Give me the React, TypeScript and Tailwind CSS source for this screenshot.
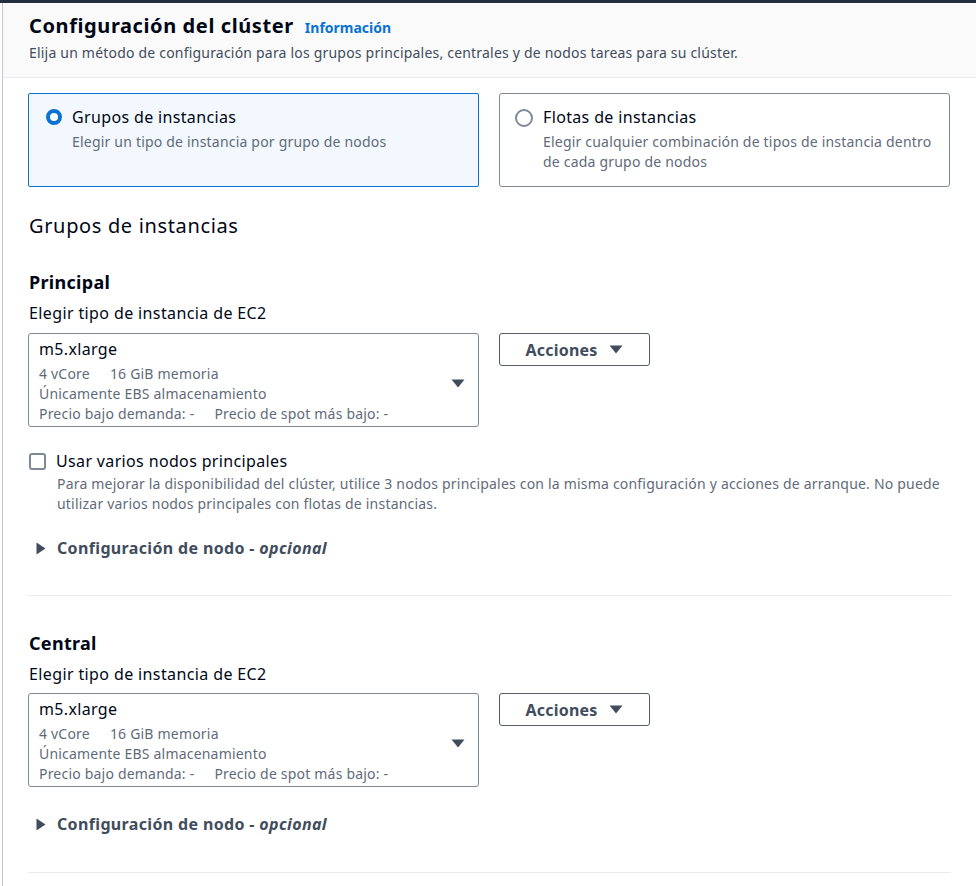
import React from 'react';

const font = { fontFamily: '"Noto Sans", "Open Sans", sans-serif' };

const Caret: React.FC<{ className?: string }> = ({ className }) => (
  <svg viewBox="0 0 14 9" className={className} fill="currentColor">
    <path d="M0.5 0.5 H13.5 L7 8.5 Z" />
  </svg>
);

const ExpandCaret: React.FC = () => (
  <svg viewBox="0 0 10 13" className="w-[10px] h-[13px] text-[#414d5c]" fill="currentColor">
    <path d="M0.5 0.5 L9.5 6.5 L0.5 12.5 Z" />
  </svg>
);

const InstanceSelect: React.FC = () => (
  <div className="flex items-start gap-[20px]">
    <div className="w-[451px] h-[94px] border border-[#7d8998] rounded-[3px] pl-[10px] pr-[13px] pt-[4px] flex items-center">
      <div className="flex-1 self-start">
        <div className="text-[16px] leading-[22px] tracking-[0.35px] text-[#000716]">m5.xlarge</div>
        <div className="mt-[4px] text-[14px] leading-[20px] text-[#5f6b7a]">
          <div>4 vCore<span className="ml-[20px]">16 GiB memoria</span></div>
          <div>Únicamente EBS almacenamiento</div>
          <div>Precio bajo demanda: -<span className="ml-[20px]">Precio de spot más bajo: -</span></div>
        </div>
      </div>
      <Caret className="w-[14px] h-[9px] text-[#414d5c] mt-[2px]" />
    </div>
    <button className="w-[151px] h-[33px] border border-[#545b64] rounded-[3px] flex items-center justify-center gap-[12px] text-[16px] font-bold tracking-[0.2px] text-[#414d5c] bg-white">
      Acciones
      <Caret className="w-[14px] h-[9px] text-[#414d5c]" />
    </button>
  </div>
);

const NodeConfig: React.FC = () => (
  <div className="flex items-center gap-[11px] pl-[8px] text-[16px] leading-[22px] font-bold tracking-[0.35px] text-[#414d5c]">
    <ExpandCaret />
    <span>
      Configuración de nodo - <i>opcional</i>
    </span>
  </div>
);

export default function App() {
  return (
    <div className="min-h-screen bg-white border-t-[3px] border-[#232f3e] tracking-[0.2px]" style={font}>
      <div className="ml-[2px] border-l border-[#c6c6cd] min-h-[883px]">
        <div className="bg-[#fafafa] border-b border-[#e9ebed] pl-[26px] pt-[10px] pb-[14px]">
          <div className="flex items-baseline gap-[11px]">
            <h1 className="text-[20px] leading-[26px] font-bold tracking-[0.6px] text-[#000716]">Configuración del clúster</h1>
            <a className="text-[14px] font-bold tracking-normal text-[#0972d3]">Información</a>
          </div>
          <p className="mt-[4px] text-[14px] leading-[20px] text-[#414d5c]">
            Elija un método de configuración para los grupos principales, centrales y de nodos tareas para su clúster.
          </p>
        </div>

        <div className="pl-[25px] pr-[25px]">
          <div className="mt-[15px] flex gap-[20px]">
            <div className="w-[451px] h-[94px] border border-[#0972d3] bg-[#f2f8fd] rounded-[2px] pt-[12px] px-[17px] flex gap-[10px]">
              <span className="mt-[3px] w-[16px] h-[16px] rounded-full border-[4px] border-[#0972d3] bg-white shrink-0" />
              <div>
                <div className="text-[16px] leading-[22px] tracking-[0.35px] text-[#000716]">Grupos de instancias</div>
                <div className="mt-[4px] text-[14px] leading-[20px] text-[#5f6b7a]">Elegir un tipo de instancia por grupo de nodos</div>
              </div>
            </div>
            <div className="w-[451px] h-[94px] border border-[#7d8998] rounded-[3px] pt-[12px] px-[15px] flex gap-[10px]">
              <span className="mt-[3px] w-[18px] h-[18px] rounded-full border-2 border-[#7d8998] bg-white shrink-0" />
              <div>
                <div className="text-[16px] leading-[22px] tracking-[0.35px] text-[#000716]">Flotas de instancias</div>
                <div className="mt-[4px] text-[14px] leading-[20px] text-[#5f6b7a]">
                  Elegir cualquier combinación de tipos de instancia dentro de cada grupo de nodos
                </div>
              </div>
            </div>
          </div>

          <h2 className="mt-[27px] ml-[1px] text-[20px] leading-[24px] tracking-[0.65px] text-[#000716]">Grupos de instancias</h2>

          <h3 className="mt-[33px] ml-[1px] text-[18px] leading-[22px] font-bold tracking-[0.3px] text-[#000716]">Principal</h3>
          <div className="mt-[9px] ml-[1px] text-[16px] leading-[22px] tracking-[0.38px] text-[#000716]">Elegir tipo de instancia de EC2</div>
          <div className="mt-[9px]">
            <InstanceSelect />
          </div>

          <div className="mt-[26px] flex gap-[10px] pl-[1px]">
            <span className="w-[17px] h-[17px] border-2 border-[#7d8998] rounded-[3px] bg-white shrink-0" />
            <div className="-mt-[3px]">
              <div className="text-[16px] leading-[22px] tracking-[0.35px] text-[#000716]">Usar varios nodos principales</div>
              <div className="mt-[2px] pl-[1px] text-[14px] leading-[20px] text-[#5f6b7a]">
                Para mejorar la disponibilidad del clúster, utilice 3 nodos principales con la misma configuración y acciones de arranque. No puede utilizar varios nodos principales con flotas de instancias.
              </div>
            </div>
          </div>

          <div className="mt-[23px]">
            <NodeConfig />
          </div>

          <div className="mt-[36px] border-t border-[#e9ebed]" />

          <h3 className="mt-[36px] ml-[1px] text-[18px] leading-[22px] font-bold tracking-[0.3px] text-[#000716]">Central</h3>
          <div className="mt-[9px] ml-[1px] text-[16px] leading-[22px] tracking-[0.38px] text-[#000716]">Elegir tipo de instancia de EC2</div>
          <div className="mt-[8px]">
            <InstanceSelect />
          </div>

          <div className="mt-[26px]">
            <NodeConfig />
          </div>

          <div className="mt-[37px] border-t border-[#e9ebed]" />
        </div>
      </div>
    </div>
  );
}
